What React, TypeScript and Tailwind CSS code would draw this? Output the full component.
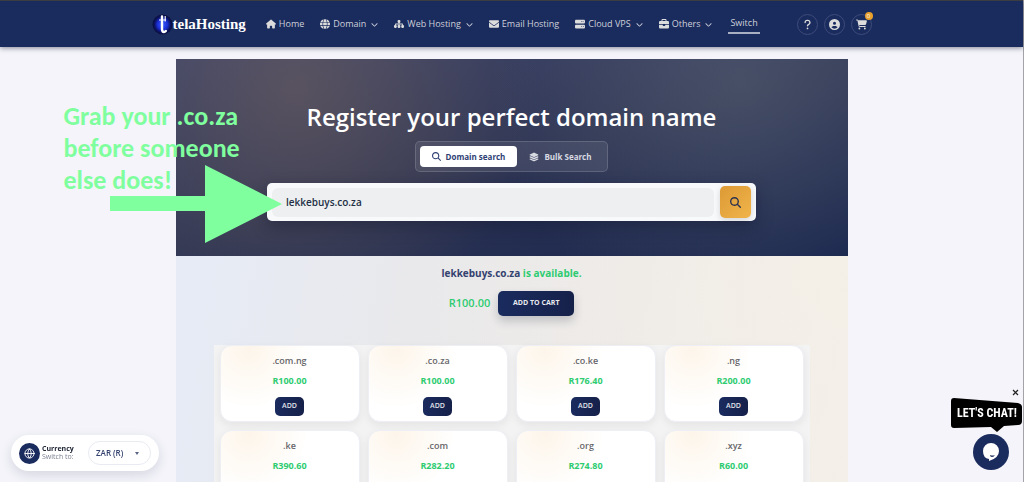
import { useState } from 'react'
import type { ReactNode } from 'react'
import {
  FaBriefcase,
  FaCartShopping,
  FaChevronDown,
  FaCircleUser,
  FaEnvelope,
  FaGlobe,
  FaHouse,
  FaLayerGroup,
  FaMagnifyingGlass,
  FaQuestion,
  FaServer,
  FaSitemap,
} from 'react-icons/fa6'
import { Globe } from 'lucide-react'

interface NavItem {
  label: string
  icon: ReactNode
  menu?: boolean
}

interface Tld {
  name: string
  price: string
}

const NAV: NavItem[] = [
  { label: 'Home', icon: <FaHouse /> },
  { label: 'Domain', icon: <FaGlobe />, menu: true },
  { label: 'Web Hosting', icon: <FaSitemap />, menu: true },
  { label: 'Email Hosting', icon: <FaEnvelope /> },
  { label: 'Cloud VPS', icon: <FaServer />, menu: true },
  { label: 'Others', icon: <FaBriefcase />, menu: true },
]

const TLDS: Tld[] = [
  { name: '.com.ng', price: 'R100.00' },
  { name: '.co.za', price: 'R100.00' },
  { name: '.co.ke', price: 'R176.40' },
  { name: '.ng', price: 'R200.00' },
  { name: '.ke', price: 'R390.60' },
  { name: '.com', price: 'R282.20' },
  { name: '.org', price: 'R274.80' },
  { name: '.xyz', price: 'R60.00' },
]

function Logo() {
  return (
    <a href="#" className="flex items-center text-white">
      <svg width="21" height="21" viewBox="0 0 21 21" aria-hidden="true">
        <defs>
          <radialGradient id="logo-glow">
            <stop offset="0" stopColor="#3a5cff" />
            <stop offset="0.5" stopColor="#1c2fd6" />
            <stop offset="0.8" stopColor="#0b1260" />
            <stop offset="1" stopColor="#0a0f38" />
          </radialGradient>
        </defs>
        <circle cx="10.5" cy="10.5" r="10" fill="url(#logo-glow)" />
        <path d="M10 2.500V15q0 3 2 3 1 0 1.800-1" stroke="#fff" strokeWidth="2.400" fill="none" strokeLinecap="round" />
        <path d="M7 6h7M13.200 2v5.500" stroke="#fff" strokeWidth="1.100" fill="none" />
      </svg>
      <span className="font-['Liberation_Serif',serif] text-[15px] leading-5 font-bold">telaHosting</span>
    </a>
  )
}

function Header() {
  return (
    <header className="border-t border-[#3b3d40] bg-[#1a2b5e] shadow-[0_1px_5px_rgba(20,25,50,0.5)]">
      <div className="mx-auto flex h-[46px] max-w-[720px] items-center">
        <Logo />
        <nav className="ml-5 flex items-center gap-4 text-[9px] text-[#cdd0da]">
          {NAV.map((item) => (
            <a key={item.label} href="#" className="flex items-center gap-[3px] whitespace-nowrap">
              <span className="text-[10px] text-[#dcdcdc]">{item.icon}</span>
              {item.label}
              {item.menu && <FaChevronDown className="ml-[2px] text-[7px]" />}
            </a>
          ))}
          <a href="#" className="border-b-2 border-[#a9afc2] px-[2px] pt-[2px] pb-[3px]">Switch</a>
        </nav>
        <div className="ml-auto flex items-center gap-[6px] text-[#dcdcdc]">
          <HeaderButton label="Help"><FaQuestion /></HeaderButton>
          <HeaderButton label="Account"><FaCircleUser /></HeaderButton>
          <HeaderButton label="Cart">
            <FaCartShopping />
            <span className="absolute -top-[3px] -right-[2px] flex size-2 items-center justify-center rounded-full bg-[#e8a02c] text-[6px] leading-none text-white">0</span>
          </HeaderButton>
        </div>
      </div>
    </header>
  )
}

function HeaderButton({ label, children }: { label: string; children: ReactNode }) {
  return (
    <button
      aria-label={label}
      className="relative flex size-[21px] items-center justify-center rounded-full border border-[#3e4c79] text-[11px]"
    >
      {children}
    </button>
  )
}

function Hero() {
  const [domain, setDomain] = useState('lekkebuys.co.za')
  const [mode, setMode] = useState<'single' | 'bulk'>('single')

  const tab = 'flex h-[21px] items-center gap-[5px] rounded-[4px] px-3 text-[8px] font-bold'
  const on = 'bg-white text-[#2f3f74]'
  const off = 'text-[#d8dae2]'

  return (
    <section className="flex flex-col items-center bg-[radial-gradient(circle_at_18%_15%,rgba(160,125,90,0.32),transparent_42%),radial-gradient(circle_at_84%_12%,rgba(125,135,140,0.3),transparent_42%),linear-gradient(165deg,#3a4269_0%,#2f3655_50%,#18254d_100%)] px-4 pt-10 pb-[35px]">
      <h1 className="text-center text-[24px] leading-9 font-semibold text-white">Register your perfect domain name</h1>
      <div className="mt-[6px] flex rounded-[5px] border border-white/15 bg-white/8 p-1">
        <button onClick={() => setMode('single')} className={`${tab} ${mode === 'single' ? on : off}`}>
          <FaMagnifyingGlass className="text-[9px]" />
          Domain search
        </button>
        <button onClick={() => setMode('bulk')} className={`${tab} ${mode === 'bulk' ? on : off}`}>
          <FaLayerGroup className="text-[10px]" />
          Bulk Search
        </button>
      </div>
      <form
        onSubmit={(e) => e.preventDefault()}
        className="mt-[11px] flex w-full max-w-[489px] items-center gap-[6px] rounded-[5px] bg-[#f8f9fa] px-[5px] py-[3px] shadow-[0_6px_16px_rgba(15,20,45,0.4)]"
      >
        <input
          aria-label="Domain name"
          value={domain}
          onChange={(e) => setDomain(e.target.value)}
          className="h-[29px] min-w-0 flex-1 rounded-[6px] bg-[#edeff0] px-[14px] text-[10px] font-semibold text-[#232f45] outline-none"
        />
        <button
          aria-label="Search"
          className="flex h-8 w-[31px] items-center justify-center rounded-[5px] bg-linear-to-br from-[#dd9a35] to-[#f0b44a] text-[11px] text-[#2c3350] shadow-[0_2px_6px_rgba(0,0,0,0.15)]"
        >
          <FaMagnifyingGlass />
        </button>
      </form>
    </section>
  )
}

function TldCard({ tld }: { tld: Tld }) {
  return (
    <article className="flex flex-col items-center rounded-[12px] border border-[#eeeff5] bg-white bg-[radial-gradient(circle_at_20%_5%,#fdf5ea_0%,#ffffff_45%)] pt-[7px] pb-[5px] shadow-[0_3px_9px_rgba(30,35,60,0.07)]">
      <h3 className="text-[9px] leading-4 font-semibold text-[#66666a]">{tld.name}</h3>
      <p className="mt-1 text-[9px] leading-4 font-bold text-[#2ecc71]">{tld.price}</p>
      <button className="mt-2 h-[19px] w-[29px] rounded-[5px] bg-linear-to-r from-[#1a2b5e] to-[#16214a] text-[7px] font-semibold text-[#e0e2ea]">ADD</button>
    </article>
  )
}

function Results() {
  return (
    <section className="bg-[radial-gradient(circle_at_100%_10%,rgba(244,239,230,0.9),transparent_60%),linear-gradient(100deg,#e6ebf6_0%,#e9e9eb_35%,#ebe9e9_65%,#f4efec_100%)] px-[38px] pt-2">
      <p className="text-center text-[10px] leading-[18px] font-bold text-[#34426f]">
        lekkebuys.co.za <span className="text-[#2ecc71]">is available.</span>
      </p>
      <div className="mt-[9px] flex items-center justify-center gap-2">
        <span className="text-[11px] font-semibold text-[#2ecc71]">R100.00</span>
        <button className="h-[25px] w-[76px] rounded-[5px] bg-linear-to-r from-[#1a2b5e] to-[#16214a] text-[7px] font-bold text-[#e8eaf0] shadow-[0_5px_10px_rgba(30,35,60,0.22)]">ADD TO CART</button>
      </div>
      <div className="mt-[29px] grid grid-cols-4 gap-2 bg-[#f3f3f3] px-[6px] pb-4">
        {TLDS.map((tld) => <TldCard key={tld.name} tld={tld} />)}
      </div>
    </section>
  )
}

function Callout() {
  return (
    <aside className="pointer-events-none absolute top-[41px] -left-28 w-[222px] text-[#80ff9f]">
      <p className="font-['Carlito','Lato',sans-serif] text-[26px] leading-8 font-bold">
        Grab your .co.za<br />before someone<br />else does!
      </p>
      <svg className="absolute top-[65px] left-[46px]" width="172" height="78" viewBox="0 0 172 78" fill="currentColor" aria-hidden="true">
        <path d="M0 31H95V0L172 39 95 78V46H0Z" />
      </svg>
    </aside>
  )
}

function CurrencySwitch() {
  return (
    <div className="fixed bottom-[11px] left-[11px] flex h-9 w-[148px] items-center rounded-full bg-white px-2 shadow-[0_4px_12px_rgba(30,35,70,0.14)]">
      <span className="flex size-[21px] items-center justify-center rounded-full bg-[#1a2b5e] text-white">
        <Globe size={11} />
      </span>
      <label htmlFor="currency" className="ml-[2px] text-[7px] leading-2 text-[#7b7f90]">
        <span className="block font-bold text-[#1c2233]">Currency</span>
        Switch to:
      </label>
      <div className="relative ml-auto flex items-center">
        <select
          id="currency"
          className="h-6 w-[63px] appearance-none rounded-full border border-[#e9ebf2] bg-white pl-[7px] text-[8px] font-semibold text-[#34426f] outline-none"
        >
          <option>ZAR (R)</option>
          <option>NGN (₦)</option>
          <option>USD ($)</option>
        </select>
        <svg className="pointer-events-none absolute right-3" width="4" height="3" viewBox="0 0 4 3" aria-hidden="true">
          <path d="M0 0h4L2 3z" fill="#5b6685" />
        </svg>
      </div>
    </div>
  )
}

function ChatWidget() {
  return (
    <div className="fixed right-[1px] bottom-3 flex w-[72px] flex-col items-end">
      <button aria-label="Close" className="mr-1">
        <svg width="7" height="7" viewBox="0 0 7 7" stroke="#222" strokeWidth="1.200" aria-hidden="true">
          <path d="M1 1l5 5M6 1L1 6" />
        </svg>
      </button>
      <div className="relative mt-[2px] h-[35px] w-full">
        <svg className="absolute inset-0" width="72" height="35" viewBox="0 0 72 35" aria-hidden="true">
          <path d="M3 0L67 5q4 1 4 4v14q0 4-4 4l-14 1-7 6-6-5-37 1q-3 0-3-3V3q0-3 3-3z" fill="#000" />
        </svg>
        <span className="absolute inset-x-0 top-[6px] text-center font-['Liberation_Sans_Narrow','Roboto_Condensed','Liberation_Sans',sans-serif] text-[12px] leading-[18px] font-bold whitespace-nowrap text-white">LET'S CHAT!</span>
      </div>
      <button aria-label="Open chat" className="mt-[1px] mr-[14px] flex size-9 items-center justify-center rounded-full bg-[#1a2b5e]">
        <svg width="18" height="20" viewBox="0 0 18 20" aria-hidden="true">
          <path d="M9 1a8 8 0 0 1 8 8q0 7-10 10v-2Q1 16 1 9a8 8 0 0 1 8-8z" fill="#fff" />
          <path d="M8 13q3 1 5 0-1 2-3 2t-2-2z" fill="#1a2b5e" />
        </svg>
      </button>
    </div>
  )
}

export default function App() {
  return (
    <div className="min-h-screen border-r border-[#a3a3a8] bg-[#f4f4fa] font-['Open_Sans','Noto_Sans',sans-serif]">
      <Header />
      <main className="relative mx-auto mt-3 max-w-[672px]">
        <Hero />
        <Results />
        <Callout />
      </main>
      <CurrencySwitch />
      <ChatWidget />
    </div>
  )
}
